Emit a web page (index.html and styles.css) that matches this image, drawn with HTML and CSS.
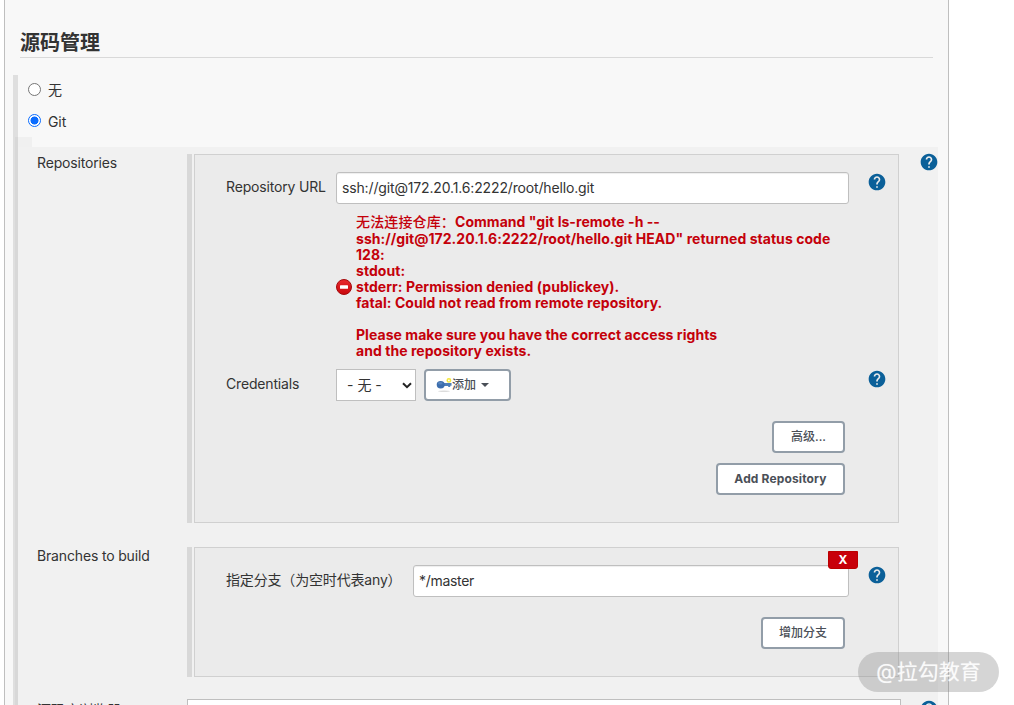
FILE: index.html
```
<!DOCTYPE html>
<html lang="zh-CN">
<head>
<meta charset="utf-8">
<title>源码管理</title>
<link rel="stylesheet" href="styles.css">
</head>
<body>
<svg class="defs" width="0" height="0" aria-hidden="true">
  <symbol id="help" viewBox="0 0 24 24">
    <path fill="#0b6099" d="M12 2C6.48 2 2 6.48 2 12s4.48 10 10 10 10-4.48 10-10S17.520 2 12 2zm1 17h-2v-2h2v2zm2.070-7.750-.9.920C13.450 12.900 13 13.500 13 15h-2v-.5c0-1.100.45-2.100 1.170-2.830l1.240-1.260c.37-.36.59-.86.59-1.410 0-1.100-.9-2-2-2s-2 .9-2 2H8c0-2.210 1.790-4 4-4s4 1.790 4 4c0 .88-.36 1.680-.93 2.250z"/>
  </symbol>
</svg>
<main class="panel">
  <h1 class="title">源码管理</h1>
  <section class="group">
    <label class="choice choice-none"><span class="radio"></span><span>无</span></label>
    <label class="choice choice-git"><span class="radio radio-on"></span><span>Git</span></label>
    <div class="tab"></div>
    <div class="body">
      <div class="row row-repos">
        <div class="row-label wide">Repositories</div>
        <div class="chunk">
          <div class="box">
            <div class="field">
              <div class="name">Repository URL</div>
              <input class="text" type="text" value="ssh://git@172.20.1.6:2222/root/hello.git">
              <svg class="help"><use href="#help"/></svg>
            </div>
            <div class="error">
              <svg class="error-icon" viewBox="0 0 16 16">
                <defs><linearGradient id="red" x1="0" y1="0" x2="0" y2="1"><stop offset="0" stop-color="#e9292d"/><stop offset="1" stop-color="#c9070c"/></linearGradient></defs>
                <circle cx="8" cy="8" r="7.500" fill="url(#red)" stroke="#a40a0d"/>
                <rect x="4" y="6.300" width="8" height="3.400" rx=".5" fill="#fff"/>
              </svg>
              <div class="error-text"><div class="first"><span class="cn">无法连接仓库：</span>Command "git ls-remote -h --</div><div class="second">ssh://git@172.20.1.6:2222/root/hello.git HEAD" returned status code</div>128:<br>stdout:<br>stderr: Permission denied (publickey).<br>fatal: Could not read from remote repository.<br><br>Please make sure you have the correct access rights<br>and the repository exists.</div>
            </div>
            <div class="field cred">
              <div class="name">Credentials</div>
              <div class="cred-controls">
                <div class="select"><span>- 无 -</span><svg class="chevron" viewBox="0 0 10 7"><path d="M1 1.200 5 5.200 9 1.200" fill="none" stroke="#222" stroke-width="2"/></svg></div>
                <button class="btn btn-add"><svg class="key" viewBox="0 0 16 16"><ellipse cx="8" cy="14.300" rx="6" ry=".7" fill="#dcdcdc"/><path d="M6 5.900h9.500v2.800h-1.300v1.300h-2v-1H6z" fill="#4f7fb8"/><ellipse cx="4.700" cy="7.800" rx="4" ry="3.700" fill="#3c6ead"/><ellipse cx="4.300" cy="6.300" rx="2.300" ry="1.200" fill="#5885bf"/><circle cx="12.900" cy="3.400" r="1.700" fill="none" stroke="#f4e73c" stroke-width="1.500"/></svg><span>添加</span><i class="caret"></i></button>
              </div>
              <svg class="help"><use href="#help"/></svg>
            </div>
            <div class="actions">
              <button class="btn btn-more">高级...</button>
              <button class="btn btn-repo">Add Repository</button>
            </div>
          </div>
        </div>
        <svg class="help help-outer"><use href="#help"/></svg>
      </div>
      <div class="row row-branches">
        <div class="row-label wide">Branches to build</div>
        <div class="chunk">
          <div class="box">
            <button class="delete">X</button>
            <div class="field branch">
              <div class="name">指定分支（为空时代表any）</div>
              <input class="text" type="text" value="*/master">
              <svg class="help"><use href="#help"/></svg>
            </div>
            <div class="actions">
              <button class="btn">增加分支</button>
            </div>
          </div>
        </div>
      </div>
      <div class="row row-browser">
        <div class="row-label">源码库浏览器</div>
        <div class="browser-select"></div>
        <svg class="help help-outer"><use href="#help"/></svg>
      </div>
    </div>
  </section>
</main>
<div class="watermark">@拉勾教育</div>
</body>
</html>
```
FILE: styles.css
```
* { box-sizing: border-box; }
body {
  margin: 0;
  height: 705px;
  overflow: hidden;
  background: #fff;
  color: #333;
  font: 14px/20px Inter, "Noto Sans CJK SC", sans-serif;
}
.defs { position: absolute; }
.panel {
  width: 945px;
  height: 705px;
  margin-left: 4px;
  padding: 28px 10px 0 8px;
  overflow: hidden;
  background: #f8f8f8;
  border: solid #bfbfbf;
  border-width: 0 1px;
}
.title {
  height: 30px;
  margin: 0 5px 17px 7px;
  border-bottom: 1px solid #d9d9d9;
  font-size: 20px;
  line-height: 30px;
  font-weight: 700;
}
.group { height: 640px; border-left: 5px solid #dfdfdf; }
.choice { display: flex; gap: 7px; padding: 6px 0 0 10px; height: 31px; }
.choice-none { line-height: 18px; }
.choice-git { letter-spacing: -.1px; }
.radio {
  width: 13px;
  height: 13px;
  margin-top: 2px;
  border: 1px solid #767676;
  border-radius: 50%;
  background: #fff;
}
.radio-on { border-color: #0a6cff; background: radial-gradient(circle, #0a6cff 3.700px, #fff 4.300px); }
.tab { width: 17px; height: 10px; margin-left: -3px; background: rgba(0, 0, 0, .03); }
.body { height: 600px; margin-left: -3px; padding: 7px 0 0 22px; background: rgba(0, 0, 0, .027); }
.row { display: flex; }
.row-label { flex: none; width: 150px; letter-spacing: -.16px; }
.row-label.wide { margin-top: -1px; }
.chunk { flex: none; width: 712px; padding-left: 2px; border-left: 5px solid #d8d8d8; }
.row-repos { height: 369px; }
.row-branches { height: 130px; margin-top: 24px; }
.row-browser { margin-top: 22px; }
.row-browser .row-label { padding-top: 1px; letter-spacing: 0; }
.browser-select { flex: none; width: 714px; height: 32px; background: #fff; border: 1px solid #bfbfbf; }
.box { position: relative; height: 100%; padding: 17px 11px 0 31px; background: #ebebeb; border: 1px solid #d0d0d0; }
.field { display: grid; grid-template-columns: 110px 513px 20px; }
.field .help { margin: 0 0 0 18px; }
.name { padding-top: 5px; letter-spacing: -.17px; }
.text {
  height: 32px;
  padding: 0 5px 1px;
  border: 1px solid #bfbfbf;
  border-radius: 3px;
  background: #fff;
  box-shadow: inset 0 1px 1px rgba(0, 0, 0, .07);
  color: #333;
  font: inherit;
  letter-spacing: -.15px;
}
.branch .text { letter-spacing: -.3px; }
.help { width: 20px; height: 20px; }
.help-outer { margin: -2px 0 0 20px; flex: none; }
.row-browser .help-outer { margin-left: 18px; margin-top: 0; }
.error { display: flex; align-items: center; gap: 4px; height: 149px; margin: 8px 0 0 110px; color: #c4000a; }
.error-icon { width: 16px; height: 16px; flex: none; }
.error-text { margin-top: -2px; line-height: 16px; font-weight: 700; letter-spacing: .05px; white-space: nowrap; }
.cn { font-weight: 500; letter-spacing: .14px; }
.first { height: 18px; line-height: 18px; }
.second { height: 16px; }
.cred { margin-top: 8px; }
.cred-controls { display: flex; gap: 8px; }
.select {
  display: flex;
  align-items: center;
  justify-content: space-between;
  width: 80px;
  height: 32px;
  padding: 0 3px 0 10px;
  border: 1px solid #bfbfbf;
  background: #fff;
}
.chevron { width: 10px; height: 7px; }
.btn {
  display: flex;
  align-items: center;
  justify-content: center;
  height: 32px;
  padding: 0 16px;
  border: 2px solid #929da8;
  border-radius: 4px;
  background: #fff;
  color: #4a4f57;
  font: 500 12px/16px Inter, "Noto Sans CJK SC", sans-serif;
}
.btn-add { width: 87px; padding: 0 0 0 10px; justify-content: flex-start; }
.btn-more { width: 73px; }
.btn-repo { width: 129px; padding: 0; font-weight: 700; letter-spacing: .14px; }
.key { width: 16px; height: 16px; }
.caret { margin-left: 5px; border: solid transparent; border-width: 4px 4px 0; border-top-color: #4a4f57; }
.actions { display: flex; flex-direction: column; align-items: flex-end; gap: 10px; margin: 20px 42px 0 0; }
.branch { grid-template-columns: 187px 436px 20px; }
.delete {
  position: absolute;
  left: 633px;
  top: 3px;
  width: 30px;
  height: 18px;
  padding: 0;
  border: 1px solid #b00;
  border-radius: 0 0 3px 3px;
  background: #c8000a;
  color: #fff;
  font: 700 12px/16px Inter, sans-serif;
}
.watermark {
  position: absolute;
  left: 858px;
  top: 652px;
  width: 141px;
  height: 40px;
  border-radius: 20px;
  background: rgba(135, 135, 135, .35);
  color: rgba(255, 255, 255, .85);
  font: 21px/40px Inter, "Noto Sans CJK SC", sans-serif;
  text-align: center;
  text-shadow: 0 0 1px rgba(255, 255, 255, .5);
}
```
